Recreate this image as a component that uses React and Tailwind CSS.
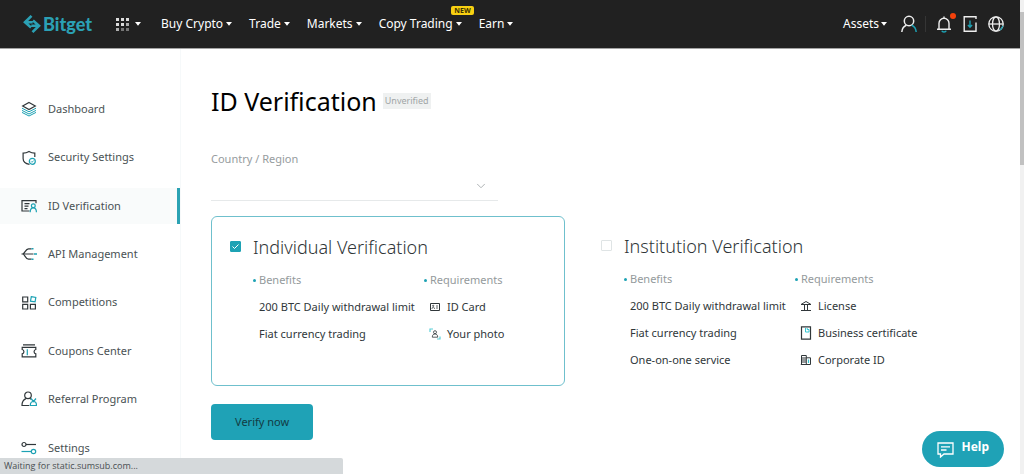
import { ChevronDown } from "lucide-react";

const TEAL = "#1da2b4";

function Svg({ size = "size-4", children, box = "0 0 16 16" }) {
  return (
    <svg viewBox={box} fill="none" stroke="#30373a" strokeWidth="1.2" className={`${size} shrink-0`} aria-hidden="true">
      {children}
    </svg>
  );
}

const DashboardIcon = () => (
  <Svg>
    <path d="M8 1.500 14.300 5 8 8.500 1.700 5Z" />
    <path d="M1 7.200 8 10.800l7-3.600M1 9.400 8 13l7-3.600M1 11.400 8 15l7-3.600" stroke={TEAL} strokeWidth="1" />
  </Svg>
);

const SecurityIcon = () => (
  <Svg>
    <path d="M8.500 14.400C4.500 13.700 2.100 12 2.100 8.500V3.200C4.700 3.100 6.400 2.400 8 1.400c1.600 1 3.300 1.700 5.800 1.800v3.900" />
    <circle cx="11.300" cy="11.300" r="3" stroke={TEAL} />
    <path d="m10 11.300 1 1 1.700-1.800" stroke={TEAL} strokeWidth=".9" />
  </Svg>
);

const IdIcon = () => (
  <Svg>
    <path d="M8.500 13H1V2.700h14v2.500M3.500 5.700h5M3.500 8.200h4M3.500 10.600h3" />
    <circle cx="12.300" cy="7.800" r="1.900" stroke={TEAL} />
    <path d="M9.200 14.200c0-2.500 1.100-4.300 3.100-4.300s3.100 1.800 3.100 4.300" stroke={TEAL} />
  </Svg>
);

const ApiIcon = () => (
  <Svg>
    <path d="M.5 8h12M1.500 8c2.500 0 2.800-5.200 6-5.200h3M1.500 8c2.500 0 2.800 5.200 6 5.200h3" />
    <path d="M10.500 2.800h2M13 8h3M10.500 13.200h2" stroke={TEAL} strokeWidth="1.500" />
  </Svg>
);

const CompetitionsIcon = () => (
  <Svg>
    <path d="M1.700 2h5v4.800h-5zM1.700 9.400h5V14h-5zM9.400 9.400h5V14h-5z" />
    <path d="m10.300 1.700 4.500.7-.7 4.500-4.600-.7Z" stroke={TEAL} />
  </Svg>
);

const CouponsIcon = () => (
  <Svg>
    <path d="M2 1.800h12M1.200 4.300h13.600v2.200a2.200 2.200 0 0 0 0 4.300V13.800H1.200v-3a2.200 2.200 0 0 0 0-4.300Z" />
    <path d="M6.300 6.200v6" stroke={TEAL} />
  </Svg>
);

const ReferralIcon = () => (
  <Svg>
    <circle cx="7" cy="4.300" r="3.300" />
    <path d="M8.300 14.500H1c0-3.500 1.500-6 4-6.900M9 7.600l1 .7" />
    <path d="M9.300 14.500c0-2.700 1-4 3.200-4s3 1.300 3 4ZM10 7.500l2.500 3 2.500-3" stroke={TEAL} />
  </Svg>
);

const SettingsIcon = () => (
  <Svg>
    <circle cx="3" cy="4.500" r="2" />
    <path d="M5 4.500h10" />
    <circle cx="12.500" cy="11.500" r="2.200" stroke={TEAL} />
    <path d="M.5 11.500h9.800" stroke={TEAL} />
  </Svg>
);

const CardIcon = () => (
  <Svg size="size-3" box="0 0 12 12">
    <path d="M1.500 2.500h9v7h-9Z" strokeWidth="1" />
    <path d="M3 8c0-1.200.5-1.800 1.200-1.800S5.500 6.800 5.500 8M7 5h2M7 7h2" strokeWidth=".8" />
    <circle cx="4.200" cy="4.800" r=".6" strokeWidth=".8" />
  </Svg>
);

const PhotoIcon = () => (
  <Svg size="size-3" box="0 0 12 12">
    <path d="M1 4V1h3M11 8.500V11H8" stroke="#5ccfd8" />
    <circle cx="6" cy="4.200" r="1.500" strokeWidth=".8" />
    <path d="M3.300 9.200C3.300 7 4.300 6 6 6s2.700 1 2.700 3.200Z" strokeWidth=".8" />
  </Svg>
);

const LicenseIcon = () => (
  <Svg size="size-3" box="0 0 12 12">
    <path d="M1 4.500 6 1.500l5 3ZM1 10.500h10M4.500 4.500v6M7.500 4.500v6" strokeWidth="1" />
  </Svg>
);

const CertificateIcon = () => (
  <Svg size="h-3.5 w-3" box="0 0 12 14">
    <path d="M1.500.8h9v12.400h-9Z" />
    <path d="M5.500 2v4H9V3.500H7.200V2" stroke="#35c6d2" strokeWidth="1" />
  </Svg>
);

const CorporateIcon = () => (
  <Svg size="size-3" box="0 0 12 12">
    <path d="M1.500 1.500h4.800v9H1.500ZM2 4h4M2 6h4M2 8h4M6.300 3.800h4.200v6.700H.8" strokeWidth="1" />
    <path d="M8.500 5.500v3.500" stroke="#35c6d2" />
  </Svg>
);

const topLinks = [
  { label: "Buy Crypto" },
  { label: "Trade" },
  { label: "Markets" },
  { label: "Copy Trading", badge: "NEW" },
  { label: "Earn" },
];

const sideLinks = [
  { label: "Dashboard", icon: DashboardIcon },
  { label: "Security Settings", icon: SecurityIcon },
  { label: "ID Verification", icon: IdIcon, active: true },
  { label: "API Management", icon: ApiIcon },
  { label: "Competitions", icon: CompetitionsIcon },
  { label: "Coupons Center", icon: CouponsIcon },
  { label: "Referral Program", icon: ReferralIcon },
  { label: "Settings", icon: SettingsIcon },
];

const individual = {
  id: "individual",
  title: "Individual Verification",
  benefits: ["200 BTC Daily withdrawal limit", "Fiat currency trading"],
  requirements: [
    { label: "ID Card", icon: CardIcon },
    { label: "Your photo", icon: PhotoIcon },
  ],
};

const institution = {
  id: "institution",
  title: "Institution Verification",
  benefits: ["200 BTC Daily withdrawal limit", "Fiat currency trading", "One-on-one service"],
  requirements: [
    { label: "License", icon: LicenseIcon },
    { label: "Business certificate", icon: CertificateIcon },
    { label: "Corporate ID", icon: CorporateIcon },
  ],
};

function Caret() {
  return (
    <svg viewBox="0 0 6 4" className="h-1 w-1.5 shrink-0" fill="currentColor" aria-hidden="true">
      <path d="M0 0h6L3 3.800Z" />
    </svg>
  );
}

function Logo() {
  return (
    <a href="#" className="flex items-center gap-0.5 text-[#2ba0b4]">
      <svg viewBox="0 0 18 18" className="size-[18px]" fill="none" stroke="currentColor" strokeWidth="2.600" aria-hidden="true">
        <path d="M8.500.9 2 7.300l6 5.200M2.500 7.300h7.200M9.500 17.100l6.500-6.400-6-5.200M15.500 10.700H8.300" />
      </svg>
      <span className="font-[Lato,sans-serif] text-lg leading-5 font-black">Bitget</span>
    </a>
  );
}

function AppsButton() {
  return (
    <button type="button" aria-label="Products" className="flex items-center gap-1.5">
      <svg viewBox="0 0 13 13" className="size-[13px]" fill="#ddd" aria-hidden="true">
        <path d="M0 0h3v3H0zM5 0h3v3H5zM10 0h3v3h-3zM0 5h3v3H0zM5 5h3v3H5z" />
        <path d="M10 5h3v3h-3zM0 10h3v3H0z" opacity=".75" />
        <path d="M5 10h3v3H5zM10 10h3v3h-3z" opacity=".45" />
      </svg>
      <Caret />
    </button>
  );
}

function Header() {
  return (
    <header className="flex h-[49px] items-center border-b border-[#a3a3a3] bg-[#212121] pr-4 pl-[23px] text-xs text-white">
      <Logo />
      <div className="ml-6">
        <AppsButton />
      </div>
      <nav className="ml-5 flex items-center gap-[17px]">
        {topLinks.map((link) => (
          <button key={link.label} type="button" className="relative flex items-center gap-[3px] whitespace-nowrap">
            {link.label}
            <Caret />
            {link.badge && (
              <span className="absolute -top-2.5 -right-3 rounded-xs bg-[#f8d012] px-[3px] text-[7px] leading-[9px] font-bold text-[#3a3000]">
                {link.badge}
              </span>
            )}
          </button>
        ))}
      </nav>
      <div className="ml-auto flex items-center">
        <button type="button" className="flex items-center gap-0.5">
          Assets
          <Caret />
        </button>
        <button type="button" aria-label="Account" className="ml-3.5">
          <svg viewBox="0 0 16 18" className="h-[18px] w-4" fill="none" stroke="#eee" strokeWidth="1.500" aria-hidden="true">
            <circle cx="8" cy="6" r="4.700" />
            <path d="M.8 17c.3-3.500 2-5.700 4.500-6.800" />
            <path d="M10.800 10.200c2.500 1.100 4.100 3.300 4.400 6.800" stroke={TEAL} />
          </svg>
        </button>
        <span className="mr-2.5 ml-2 h-4 w-px bg-[#353535]" />
        <button type="button" aria-label="Notifications" className="relative">
          <svg viewBox="0 0 16 18" className="h-[18px] w-4" fill="none" stroke="#eee" strokeWidth="1.400" aria-hidden="true">
            <path d="M1 14.300h14M3 14.300V8.200a5 5 0 0 1 10 0v6.100M8 3.200V1.500" />
            <path d="M5.800 15.800c.6 1.500 3.800 1.500 4.400 0" stroke={TEAL} />
          </svg>
          <span className="absolute -top-0.5 -right-1 size-1.5 rounded-full bg-[#f4410b]" />
        </button>
        <button type="button" aria-label="Download" className="ml-2.5">
          <svg viewBox="0 0 16 18" className="h-[18px] w-4" fill="none" stroke="#eee" strokeWidth="1.400" aria-hidden="true">
            <path d="M14 4V1.700H2.200v14.600H14V7.500" />
            <path d="M8 5.500V12M5.900 10 8 12.200 10.100 10" stroke={TEAL} />
          </svg>
        </button>
        <button type="button" aria-label="Language" className="ml-2.5">
          <svg viewBox="0 0 16 16" className="size-4" fill="none" stroke="#eee" strokeWidth="1.300" aria-hidden="true">
            <circle cx="8" cy="8" r="7.200" />
            <ellipse cx="8" cy="8" rx="3.500" ry="7.200" />
            <path d="M.8 8h14.400" />
            <path d="M14.800 9.800a7.200 7.200 0 0 1-3 4.200" stroke={TEAL} />
          </svg>
        </button>
      </div>
    </header>
  );
}

function Sidebar() {
  return (
    <aside className="flex w-[181px] shrink-0 flex-col border-r border-[#f6f9fa] pt-9 pb-0.5">
      {sideLinks.map((link) => {
        const Icon = link.icon;
        return (
          <div key={link.label} className="flex flex-1 items-center">
            <a
              href="#"
              aria-current={link.active ? "page" : undefined}
              className={`flex h-9 flex-1 items-center gap-[11px] pl-[21px] text-[11px] whitespace-nowrap text-[#4a5254] ${
                link.active ? "border-r-3 border-[#2ba2b3] bg-[#f9fbfb]" : ""
              }`}
            >
              <Icon />
              {link.label}
            </a>
          </div>
        );
      })}
    </aside>
  );
}

function ColumnTitle({ children }) {
  return (
    <h3 className="flex items-center gap-[3px] text-[11px] leading-4 text-[#949a9c]">
      <span className="size-[3px] rounded-full bg-[#1da2b4]" />
      {children}
    </h3>
  );
}

function VerificationCard({ option, checked }) {
  return (
    <section className={`flex gap-3 px-[18px] pt-4 pb-[18px] ${checked ? "rounded-md border border-[#6fc0cd]" : ""}`}>
      <input
        id={option.id}
        type="checkbox"
        defaultChecked={checked}
        className="mt-2 size-[11px] shrink-0 appearance-none rounded-[1px] border border-[#dfe4e5] bg-center bg-no-repeat checked:border-[#1da2b4] checked:bg-[#1da2b4] checked:bg-[url('data:image/svg+xml,%3Csvg%20xmlns=%22http://www.w3.org/2000/svg%22%20viewBox=%220%200%209%209%22%3E%3Cpath%20d=%22M1.500%204.500l2%202%204-4%22%20fill=%22none%22%20stroke=%22white%22/%3E%3C/svg%3E')]"
      />
      <div className="min-w-0 flex-1">
        <label htmlFor={option.id} className="block text-lg leading-7 font-light whitespace-nowrap text-[#303638]">
          {option.title}
        </label>
        <div className="mt-[11px] grid grid-cols-[171px_1fr]">
          <div>
            <ColumnTitle>Benefits</ColumnTitle>
            <ul className="mt-[11px] flex flex-col gap-[11px] pl-1.5 text-[11px] leading-4 whitespace-nowrap text-[#30373a]">
              {option.benefits.map((text) => (
                <li key={text}>{text}</li>
              ))}
            </ul>
          </div>
          <div>
            <ColumnTitle>Requirements</ColumnTitle>
            <ul className="mt-[11px] flex flex-col gap-[11px] pl-[5px] text-[11px] leading-4 whitespace-nowrap text-[#30373a]">
              {option.requirements.map(({ label, icon: Icon }) => (
                <li key={label} className="flex h-4 items-center gap-1.5">
                  <Icon />
                  {label}
                </li>
              ))}
            </ul>
          </div>
        </div>
      </div>
    </section>
  );
}

function Main() {
  return (
    <main className="min-w-0 flex-1 pt-[34px] pl-[30px]">
      <div className="flex items-center gap-1.5">
        <h1 className="text-[25px] leading-9 text-black">ID Verification</h1>
        <span className="bg-[#eff1f1] px-0.5 text-[9px] leading-4 text-[#a0a5a6]">Unverified</span>
      </div>
      <label htmlFor="country" className="mt-8 block text-[11px] leading-4 text-[#969c9e]">
        Country / Region
      </label>
      <div className="relative mt-1 w-[287px]">
        <select id="country" defaultValue="" className="block h-[30px] w-full appearance-none border-b border-[#e6e9ea] bg-transparent text-[11px]">
          <option value="" />
        </select>
        <ChevronDown className="pointer-events-none absolute top-2 right-2.5 size-3.5 text-[#a3a8aa]" strokeWidth={1.5} />
      </div>
      <div className="mt-[15px] grid grid-cols-2 gap-[18px] pr-[83px]">
        <VerificationCard option={individual} checked />
        <VerificationCard option={institution} />
      </div>
      <button type="button" className="mt-[18px] h-9 rounded-sm bg-[#1fa2b6] px-6 text-[11px] text-[#123b43]">
        Verify now
      </button>
    </main>
  );
}

export default function App() {
  return (
    <div className="flex min-h-screen bg-white font-['Noto_Sans',sans-serif]">
      <div className="flex min-w-0 flex-1 flex-col">
        <Header />
        <div className="flex flex-1">
          <Sidebar />
          <Main />
        </div>
      </div>
      <div className="w-1 shrink-0 bg-[#f1f1f1] pt-3">
        <div className="h-[153px] bg-[#c1c1c1]" />
      </div>
      <button
        type="button"
        className="fixed right-5 bottom-[7px] flex h-9 items-center gap-[7px] rounded-full bg-[#1fa2b6] px-[15px] pb-1 text-xs font-bold text-white"
      >
        <svg viewBox="0 0 17 17" className="mt-1 size-[17px]" fill="none" stroke="currentColor" strokeWidth="1.300" aria-hidden="true">
          <path d="M1 2h15v11H7l-3.500 3V13H1ZM4 5.800h9M4 9h5.500" />
        </svg>
        Help
      </button>
      <div className="fixed bottom-0 left-0 w-[343px] rounded-tr-xs bg-[#d5d9db] px-1 font-['Open_Sans',sans-serif] text-[9px] leading-4 text-[#4a4f52]">
        Waiting for static.sumsub.com...
      </div>
    </div>
  );
}
